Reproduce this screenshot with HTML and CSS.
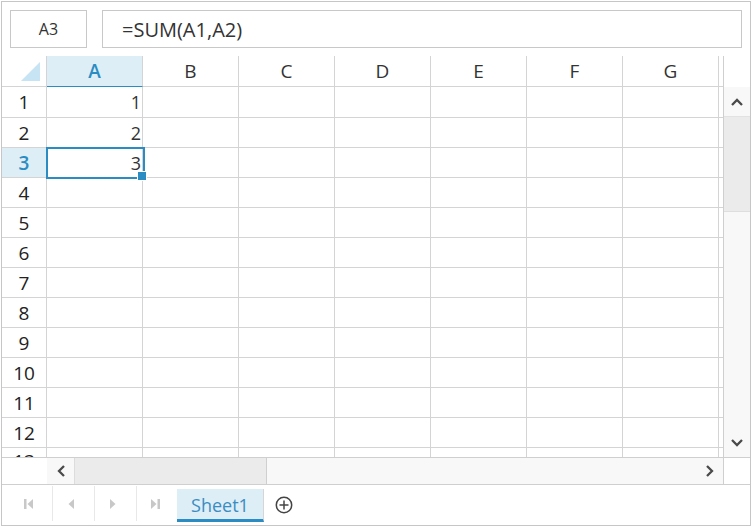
FILE: index.html
```html
<!DOCTYPE html>
<html>
<head>
<meta charset="utf-8">
<link rel="stylesheet" href="styles.css">
</head>
<body>
<div class="sheet">
  <div class="toolbar">
    <div class="namebox">A3</div>
    <div class="formula">=SUM(A1,A2)</div>
  </div>
  <div class="main">
    <div class="gridwrap">
      <div class="grid">
        <div class="corner"><svg width="19" height="19" viewBox="0 0 19 19"><polygon points="19,0 19,19 0,19" fill="#c6e4f4"/></svg></div>
        <div class="colhead sel">A</div>
        <div class="colhead">B</div>
        <div class="colhead">C</div>
        <div class="colhead">D</div>
        <div class="colhead">E</div>
        <div class="colhead">F</div>
        <div class="colhead">G</div>
        <div class="filler head"></div>

        <div class="rowhead">1</div><div class="cell num">1</div><div class="cell"></div><div class="cell"></div><div class="cell"></div><div class="cell"></div><div class="cell"></div><div class="cell"></div><div class="filler"></div>
        <div class="rowhead">2</div><div class="cell num">2</div><div class="cell"></div><div class="cell"></div><div class="cell"></div><div class="cell"></div><div class="cell"></div><div class="cell"></div><div class="filler"></div>
        <div class="rowhead sel">3</div><div class="cell num">3</div><div class="cell"></div><div class="cell"></div><div class="cell"></div><div class="cell"></div><div class="cell"></div><div class="cell"></div><div class="filler"></div>
        <div class="rowhead">4</div><div class="cell"></div><div class="cell"></div><div class="cell"></div><div class="cell"></div><div class="cell"></div><div class="cell"></div><div class="cell"></div><div class="filler"></div>
        <div class="rowhead">5</div><div class="cell"></div><div class="cell"></div><div class="cell"></div><div class="cell"></div><div class="cell"></div><div class="cell"></div><div class="cell"></div><div class="filler"></div>
        <div class="rowhead">6</div><div class="cell"></div><div class="cell"></div><div class="cell"></div><div class="cell"></div><div class="cell"></div><div class="cell"></div><div class="cell"></div><div class="filler"></div>
        <div class="rowhead">7</div><div class="cell"></div><div class="cell"></div><div class="cell"></div><div class="cell"></div><div class="cell"></div><div class="cell"></div><div class="cell"></div><div class="filler"></div>
        <div class="rowhead">8</div><div class="cell"></div><div class="cell"></div><div class="cell"></div><div class="cell"></div><div class="cell"></div><div class="cell"></div><div class="cell"></div><div class="filler"></div>
        <div class="rowhead">9</div><div class="cell"></div><div class="cell"></div><div class="cell"></div><div class="cell"></div><div class="cell"></div><div class="cell"></div><div class="cell"></div><div class="filler"></div>
        <div class="rowhead">10</div><div class="cell"></div><div class="cell"></div><div class="cell"></div><div class="cell"></div><div class="cell"></div><div class="cell"></div><div class="cell"></div><div class="filler"></div>
        <div class="rowhead">11</div><div class="cell"></div><div class="cell"></div><div class="cell"></div><div class="cell"></div><div class="cell"></div><div class="cell"></div><div class="cell"></div><div class="filler"></div>
        <div class="rowhead">12</div><div class="cell"></div><div class="cell"></div><div class="cell"></div><div class="cell"></div><div class="cell"></div><div class="cell"></div><div class="cell"></div><div class="filler"></div>
        <div class="rowhead last">13</div><div class="cell"></div><div class="cell"></div><div class="cell"></div><div class="cell"></div><div class="cell"></div><div class="cell"></div><div class="cell"></div><div class="filler"></div>
      </div>
      <div class="selection"></div>
      <div class="handle"></div>
    </div>
    <div class="vscroll">
      <div class="vspacer"></div>
      <div class="vbtn"><svg width="12" height="8" viewBox="0 0 12 8"><polyline points="1,7 6,2 11,7" fill="none" stroke="#4a4a4a" stroke-width="2.3"/></svg></div>
      <div class="vthumb"></div>
      <div class="vtrack"></div>
      <div class="vbtn"><svg width="12" height="8" viewBox="0 0 12 8"><polyline points="1,1 6,6 11,1" fill="none" stroke="#4a4a4a" stroke-width="2.3"/></svg></div>
    </div>
  </div>
  <div class="hscroll">
    <div class="hspacer"></div>
    <div class="hbtn"><svg width="8" height="12" viewBox="0 0 8 12"><polyline points="7,1 2,6 7,11" fill="none" stroke="#4a4a4a" stroke-width="2.3"/></svg></div>
    <div class="hthumb"></div>
    <div class="htrack"></div>
    <div class="hbtn right"><svg width="8" height="12" viewBox="0 0 8 12"><polyline points="1,1 6,6 1,11" fill="none" stroke="#4a4a4a" stroke-width="2.3"/></svg></div>
    <div class="hcorner"></div>
  </div>
  <div class="tabbar">
    <div class="nav">
      <div class="navbtn"><svg width="10" height="12" viewBox="0 0 10 12"><rect x="0" y="1" width="2.5" height="10" fill="#c8c8c8"/><polygon points="9,1 3.5,6 9,11" fill="#c8c8c8"/></svg></div>
      <div class="navbtn"><svg width="10" height="12" viewBox="0 0 10 12"><polygon points="8,1 2.5,6 8,11" fill="#c8c8c8"/></svg></div>
      <div class="navbtn"><svg width="10" height="12" viewBox="0 0 10 12"><polygon points="2,1 7.5,6 2,11" fill="#c8c8c8"/></svg></div>
      <div class="navbtn last"><svg width="10" height="12" viewBox="0 0 10 12"><polygon points="1,1 6.5,6 1,11" fill="#c8c8c8"/><rect x="7.5" y="1" width="2.5" height="10" fill="#c8c8c8"/></svg></div>
    </div>
    <div class="tab">Sheet1</div>
    <div class="add"><svg width="18" height="18" viewBox="0 0 18 18"><circle cx="9" cy="9" r="7.7" fill="none" stroke="#444" stroke-width="1.5"/><line x1="9" y1="4.5" x2="9" y2="13.5" stroke="#444" stroke-width="1.5"/><line x1="4.5" y1="9" x2="13.5" y2="9" stroke="#444" stroke-width="1.5"/></svg></div>
  </div>
</div>
</body>
</html>
```
FILE: styles.css
```css
* { box-sizing: border-box; }
html, body { margin: 0; padding: 0; background: #fff; }
body { padding: 1px; font-family: "Open Sans", "Noto Sans", sans-serif; color: #333; }

.sheet {
  width: 750px;
  height: 525px;
  border: 1px solid #c6c6c6;
  display: flex;
  flex-direction: column;
  overflow: hidden;
}

.toolbar {
  display: flex;
  gap: 15px;
  padding: 8px;
  height: 54px;
  flex: none;
}
.namebox {
  width: 77px;
  height: 38px;
  border: 1px solid #c8c8c8;
  display: flex;
  align-items: center;
  justify-content: center;
  font-size: 16px;
}
.formula {
  flex: 1;
  height: 38px;
  border: 1px solid #c8c8c8;
  display: flex;
  align-items: center;
  padding-left: 19px;
  font-size: 20px;
}

.main {
  display: flex;
  height: 401px;
  flex: none;
}
.gridwrap {
  position: relative;
  flex: 1;
  overflow: hidden;
}
.grid {
  display: grid;
  grid-template-columns: 45px repeat(7, 96px) 1fr;
  grid-template-rows: 31px 31px;
  grid-auto-rows: 30px;
}
.grid > div {
  border-bottom: 1px solid #d4d4d4;
  border-right: 1px solid #d4d4d4;
}
.grid > .filler { border-right: none; }

.corner {
  display: flex;
  align-items: flex-end;
  justify-content: flex-end;
  padding: 0 6px 5px 0;
}
.corner svg { display: block; }

.colhead {
  display: flex;
  align-items: center;
  justify-content: center;
  font-size: 19px;
  color: #333;
}
.colhead.sel {
  background: #ddeef6;
  color: #2a8cc2;
  font-weight: 600;
  border-bottom-color: #2a8cc2 !important;
}
.rowhead {
  display: flex;
  align-items: center;
  justify-content: center;
  font-size: 19px;
  color: #222;
}
.rowhead.last {
  align-items: flex-start;
  padding-top: 3px;
  line-height: 20px;
}
.rowhead.sel {
  background: #ddeef6;
  color: #2a8cc2;
  font-weight: 600;
}
.cell.num {
  display: flex;
  align-items: center;
  justify-content: flex-end;
  padding-right: 1px;
  font-size: 18px;
  color: #333;
}

.selection {
  position: absolute;
  left: 44px;
  top: 91px;
  width: 99px;
  height: 32px;
  border: 2px solid #2a8cc2;
}
.handle {
  position: absolute;
  left: 135px;
  top: 115px;
  width: 10px;
  height: 10px;
  background: #2a8cc2;
  border: 1px solid #fff;
}

.vscroll {
  width: 27px;
  flex: none;
  border-left: 1px solid #cfcfcf;
  display: flex;
  flex-direction: column;
}
.vspacer { height: 31px; background: #fff; flex: none; }
.vbtn {
  height: 29px;
  flex: none;
  background: #f8f8f8;
  display: flex;
  align-items: center;
  justify-content: center;
}
.vbtn svg { display: block; }
.vthumb {
  height: 96px;
  flex: none;
  background: #ebebeb;
  border-top: 1px solid #e2e2e2;
  border-bottom: 1px solid #dedede;
}
.vtrack { flex: 1; background: #f8f8f8; }

.hscroll {
  height: 28px;
  flex: none;
  border-top: 1px solid #cfcfcf;
  border-bottom: 1px solid #cfcfcf;
  display: flex;
}
.hspacer { width: 45px; flex: none; background: #fff; }
.hbtn {
  width: 27px;
  flex: none;
  background: #f8f8f8;
  display: flex;
  align-items: center;
  justify-content: center;
}
.hbtn.right { width: 30px; justify-content: flex-start; padding-left: 13px; }
.hbtn svg { display: block; }
.hthumb {
  width: 193px;
  flex: none;
  background: #ebebeb;
  border-left: 1px solid #dcdcdc;
  border-right: 1px solid #cfcfcf;
}
.htrack { flex: 1; background: #f8f8f8; }
.hcorner {
  width: 27px;
  flex: none;
  background: #fff;
  border-left: 1px solid #cfcfcf;
}

.tabbar {
  flex: 1;
  display: flex;
  align-items: flex-start;
}
.nav {
  display: flex;
  margin-left: 9px;
  margin-top: 1px;
}
.navbtn {
  width: 42px;
  height: 35px;
  border-right: 1px solid #e8e8e8;
  display: flex;
  align-items: center;
  padding-left: 13px;
}
.navbtn.last { width: 40px; border-right: none; }
.navbtn svg { display: block; }

.tab {
  margin-top: 4px;
  width: 87px;
  height: 33px;
  background: #ddeef6;
  border-right: 1px solid #d6d6d6;
  border-bottom: 3px solid #2a8cc2;
  color: #3a8dc2;
  font-size: 18px;
  display: flex;
  align-items: center;
  justify-content: center;
  padding-top: 2px;
}
.add {
  margin-left: 11px;
  margin-top: 11px;
  display: flex;
}
.add svg { display: block; }
```
